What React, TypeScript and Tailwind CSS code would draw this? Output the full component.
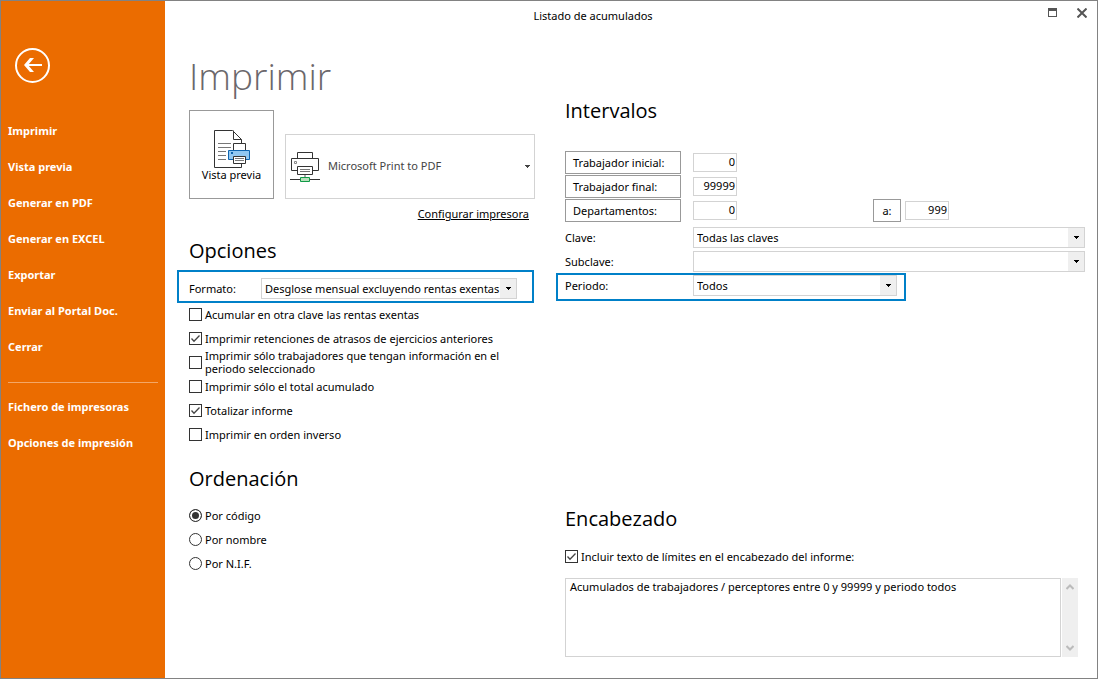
import type {ReactNode} from 'react';

const navItems = [
	'Imprimir',
	'Vista previa',
	'Generar en PDF',
	'Generar en EXCEL',
	'Exportar',
	'Enviar al Portal Doc.',
	'Cerrar',
];

const secondaryItems = ['Fichero de impresoras', 'Opciones de impresión'];

const options = [
	{label: 'Acumular en otra clave las rentas exentas', checked: false},
	{label: 'Imprimir retenciones de atrasos de ejercicios anteriores', checked: true},
	{label: 'Imprimir sólo trabajadores que tengan información en el periodo seleccionado', checked: false},
	{label: 'Imprimir sólo el total acumulado', checked: false},
	{label: 'Totalizar informe', checked: true},
	{label: 'Imprimir en orden inverso', checked: false},
];

const sortOrders = ['Por código', 'Por nombre', 'Por N.I.F.'];

const Caret = ({className = ''}: {className?: string}) => (
	<svg width="5" height="3" viewBox="0 0 5 3" shapeRendering="crispEdges" className={className} aria-hidden="true">
		<path d="M0 0h5v1H4v1H3v1H2V2H1V1H0z" fill="currentColor" />
	</svg>
);

const BackIcon = () => (
	<svg width="35" height="35" viewBox="0 0 35 35" fill="none" stroke="#fff" aria-hidden="true">
		<circle cx="17.5" cy="17.5" r="16.5" strokeWidth="2" />
		<path d="M27 17H11" strokeWidth="2" />
		<path d="M9 17L15 10H19L13 17L19 24H15Z" fill="#fff" stroke="none" />
	</svg>
);

const PreviewIcon = () => (
	<svg width="36" height="38" viewBox="0 0 36 38" fill="none" aria-hidden="true">
		<path d="M27.5 13V9.500L18.500 .5H.5V37.500H27.5V34" fill="#fff" stroke="#333" />
		<path d="M19.500 .5V9.500H27.5" stroke="#333" />
		<path d="M4 13.500H17M4 17.500H17M4 21.500H12M4 25.500H12M4 29.500H12" stroke="#777" />
		<path d="M19.500 20V13.500H31.500V20" fill="#fff" stroke="#333" />
		<path d="M14.500 20.500H35.500V29.500H14.500Z" fill="#91c8f2" stroke="#0f65b0" />
		<path d="M17 22H19V24H17Z" fill="#0f65b0" />
		<path d="M19.500 26.500H31.500V33.500H19.500Z" fill="#fff" stroke="#333" />
		<path d="M21 28.500H30M21 30.500H30" stroke="#777" />
	</svg>
);

const PrinterIcon = () => (
	<svg width="30" height="30" viewBox="0 0 30 30" fill="none" aria-hidden="true">
		<path d="M7.500 7V.5H22.500V7" stroke="#333" />
		<path d="M7 18.500H1.500V6.500H28.500V18.500H23" stroke="#333" />
		<path d="M4.500 9.500H6.500V11.500H4.500Z" stroke="#888" />
		<path d="M7.500 14.500H22.500V22.500H7.500Z" fill="#fff" stroke="#333" />
		<path d="M10 17.500H20M10 19.500H20" stroke="#777" />
		<path d="M15 23V25" stroke="#aaa" strokeWidth="2" />
		<path d="M0 27.500H30" stroke="#333" />
		<path d="M10.500 25.500H19.500V29.500H10.500Z" fill="#b9dfbc" stroke="#109a47" />
	</svg>
);

const Highlight = ({className, children}: {className: string; children: ReactNode}) => (
	<div className={`flex items-center border-2 border-[#0080c8] ${className}`}>{children}</div>
);

const SectionTitle = ({children}: {children: ReactNode}) => (
	<h2 className="font-['Open_Sans','Noto_Sans',sans-serif] text-[20px] leading-8">{children}</h2>
);

type SelectBoxProps = {
	id: string;
	value: string;
	className?: string;
};

const SelectBox = ({id, value, className = ''}: SelectBoxProps) => (
	<div className={`relative h-[21px] ${className}`}>
		<select
			id={id}
			defaultValue={value}
			className="block h-full w-full appearance-none border border-[#d3d3d3] bg-white pr-4 pl-[3px] text-[11px] leading-[19px]"
		>
			<option value={value}>{value}</option>
		</select>
		<span className="pointer-events-none absolute inset-y-px right-px flex w-4 items-center justify-center bg-[#efefef]">
			<Caret />
		</span>
	</div>
);

const CheckRow = ({label, checked}: {label: string; checked: boolean}) => (
	<label className="flex h-6 items-center gap-[3px] leading-[13px]">
		<span className="relative flex shrink-0">
			<input
				type="checkbox"
				defaultChecked={checked}
				className="peer size-[13px] appearance-none border border-[#333] bg-white"
			/>
			<svg
				viewBox="0 0 13 13"
				className="pointer-events-none absolute inset-0 hidden size-[13px] peer-checked:block"
				fill="none"
				stroke="#444"
				strokeWidth="1.3"
				aria-hidden="true"
			>
				<path d="M2.500 6.500L5 9.300L10.500 3.500" />
			</svg>
		</span>
		<span>{label}</span>
	</label>
);

const NumberBox = ({label, value}: {label: string; value: string}) => (
	<input
		type="text"
		aria-label={label}
		defaultValue={value}
		className="h-[19px] w-11 border border-[#d3d3d3] pr-px pb-[2px] text-right text-[11px]"
	/>
);

const RangeButton = ({children, className}: {children: ReactNode; className: string}) => (
	<button type="button" className={`h-[23px] border border-[#999] pt-px ${className}`}>
		{children}
	</button>
);

const Sidebar = () => (
	<aside className="w-[164px] shrink-0 bg-[#eb6c00] pt-[47px] text-white">
		<button type="button" aria-label="Volver" className="ml-[14px] block">
			<BackIcon />
		</button>
		<nav className="mt-[30px] px-[7px] text-[11px] font-bold">
			{navItems.map((item) => (
				<a key={item} href="#" className="flex h-9 items-center whitespace-nowrap">
					{item}
				</a>
			))}
			<hr className="mt-[17px] mb-[6px] border-[#f3a767]" />
			{secondaryItems.map((item) => (
				<a key={item} href="#" className="flex h-9 items-center whitespace-nowrap">
					{item}
				</a>
			))}
		</nav>
	</aside>
);

const TitleBar = () => (
	<header className="flex h-[30px] items-center">
		<p className="flex-1 text-center text-[11px]">Listado de acumulados</p>
		<div className="flex w-[76px] items-center justify-end gap-5 pr-[10px] pb-[7px]">
			<button type="button" aria-label="Maximizar">
				<svg width="9" height="9" viewBox="0 0 9 9" shapeRendering="crispEdges" aria-hidden="true">
					<path d="M0 0H9V9H0ZM1 3V8H8V3Z" fill="#555" fillRule="evenodd" />
				</svg>
			</button>
			<button type="button" aria-label="Cerrar ventana">
				<svg width="10" height="10" viewBox="0 0 10 10" fill="none" stroke="#555" strokeWidth="2" aria-hidden="true">
					<path d="M.5 .5L9.500 9.500M9.500 .5L.5 9.500" />
				</svg>
			</button>
		</div>
	</header>
);

const PrintColumn = () => (
	<div className="w-[376px] shrink-0">
		<h1 className="mt-[21px] font-['Open_Sans','Noto_Sans',sans-serif] text-[37px] leading-[48px] font-light text-[#6b676b]">
			Imprimir
		</h1>
		<div className="mt-[10px] flex items-end gap-[11px]">
			<button
				type="button"
				className="flex h-[89px] w-[85px] flex-col items-center justify-center border border-[#999] pt-[2px]"
			>
				<PreviewIcon />
				<span className="leading-[14px]">Vista previa</span>
			</button>
			<button
				type="button"
				className="flex h-[65px] w-[250px] items-center border border-[#d3d3d3] pr-1 pl-[4px] text-[#444]"
			>
				<PrinterIcon />
				<span className="ml-[8px] flex-1 text-left">Microsoft Print to PDF</span>
				<Caret />
			</button>
		</div>
		<div className="mt-[5px] mr-[36px] flex justify-end">
			<a href="#" className="leading-5 underline">
				Configurar impresora
			</a>
		</div>
		<section className="mt-[11px]">
			<SectionTitle>Opciones</SectionTitle>
			<Highlight className="mt-[3px] -ml-3 h-[33px] w-[357px] pt-1 pl-[10px]">
				<label htmlFor="formato" className="w-[72px] leading-[21px]">
					Formato:
				</label>
				<SelectBox id="formato" value="Desglose mensual excluyendo rentas exentas" className="w-64" />
			</Highlight>
			<div className="-mt-px w-[320px]">
				{options.map((option) => (
					<CheckRow key={option.label} {...option} />
				))}
			</div>
		</section>
		<section className="mt-[17px]">
			<SectionTitle>Ordenación</SectionTitle>
			<div className="mt-2">
				{sortOrders.map((order, index) => (
					<label key={order} className="flex h-6 items-center gap-[3px] leading-[13px]">
						<input
							type="radio"
							name="orden"
							defaultChecked={index === 0}
							className="size-[13px] appearance-none rounded-full border border-[#333] bg-white checked:border-[#333] checked:bg-[#333] checked:shadow-[inset_0_0_0_2px_#fff]"
						/>
						{order}
					</label>
				))}
			</div>
		</section>
	</div>
);

const RangeColumn = () => (
	<div className="flex min-w-0 flex-1 flex-col">
		<section className="pt-16">
			<SectionTitle>Intervalos</SectionTitle>
			<div className="mt-6 grid gap-px">
				<div className="flex items-center gap-3">
					<RangeButton className="w-[116px] pl-[7px] text-left">Trabajador inicial:</RangeButton>
					<NumberBox label="Trabajador inicial" value="0" />
				</div>
				<div className="flex items-center gap-3">
					<RangeButton className="w-[116px] pl-[7px] text-left">Trabajador final:</RangeButton>
					<NumberBox label="Trabajador final" value="99999" />
				</div>
				<div className="flex items-center gap-3">
					<RangeButton className="w-[116px] pl-[7px] text-left">Departamentos:</RangeButton>
					<NumberBox label="Departamento inicial" value="0" />
					<div className="ml-[124px] flex items-center gap-1">
						<RangeButton className="w-7">a:</RangeButton>
						<NumberBox label="Departamento final" value="999" />
					</div>
				</div>
			</div>
			<div className="mt-[5px] flex h-6 items-start">
				<label htmlFor="clave" className="w-32 leading-[21px]">
					Clave:
				</label>
				<SelectBox id="clave" value="Todas las claves" className="flex-1" />
			</div>
			<div className="flex h-[22px] items-start">
				<label htmlFor="subclave" className="w-32 leading-[21px]">
					Subclave:
				</label>
				<SelectBox id="subclave" value="" className="flex-1" />
			</div>
			<Highlight className="-ml-[9px] w-[350px] pb-[3px] pl-[7px]">
				<label htmlFor="periodo" className="w-32 leading-[21px]">
					Periodo:
				</label>
				<SelectBox id="periodo" value="Todos" className="w-[204px]" />
			</Highlight>
		</section>
		<section className="mt-auto">
			<SectionTitle>Encabezado</SectionTitle>
			<div className="mt-[9px]">
				<CheckRow label="Incluir texto de límites en el encabezado del informe:" checked />
			</div>
			<div className="mt-[10px] mr-[7px] flex gap-px">
				<textarea
					aria-label="Texto del encabezado"
					defaultValue="Acumulados de trabajadores / perceptores entre 0 y 99999 y periodo todos"
					className="h-[79px] flex-1 resize-none border border-[#d3d3d3] px-1 text-[11px] leading-[15px]"
				/>
				<div className="flex w-4 flex-col items-center justify-between bg-[#efefef] py-[6px]">
					<button type="button" aria-label="Subir">
						<svg width="8" height="6" viewBox="0 0 8 6" fill="none" stroke="#bbb" strokeWidth="2" aria-hidden="true">
							<path d="M.5 5L4 1.500L7.500 5" />
						</svg>
					</button>
					<button type="button" aria-label="Bajar">
						<svg width="8" height="6" viewBox="0 0 8 6" fill="none" stroke="#bbb" strokeWidth="2" aria-hidden="true">
							<path d="M.5 1L4 4.500L7.500 1" />
						</svg>
					</button>
				</div>
			</div>
		</section>
	</div>
);

export default function App() {
	return (
		<div className="flex min-h-screen border border-[#828282] bg-white font-['Noto_Sans','Open_Sans',sans-serif] text-[11px] text-black">
			<Sidebar />
			<div className="flex min-w-0 flex-1 flex-col">
				<TitleBar />
				<main className="flex flex-1 pr-3 pb-[21px] pl-6">
					<PrintColumn />
					<RangeColumn />
				</main>
			</div>
		</div>
	);
}
